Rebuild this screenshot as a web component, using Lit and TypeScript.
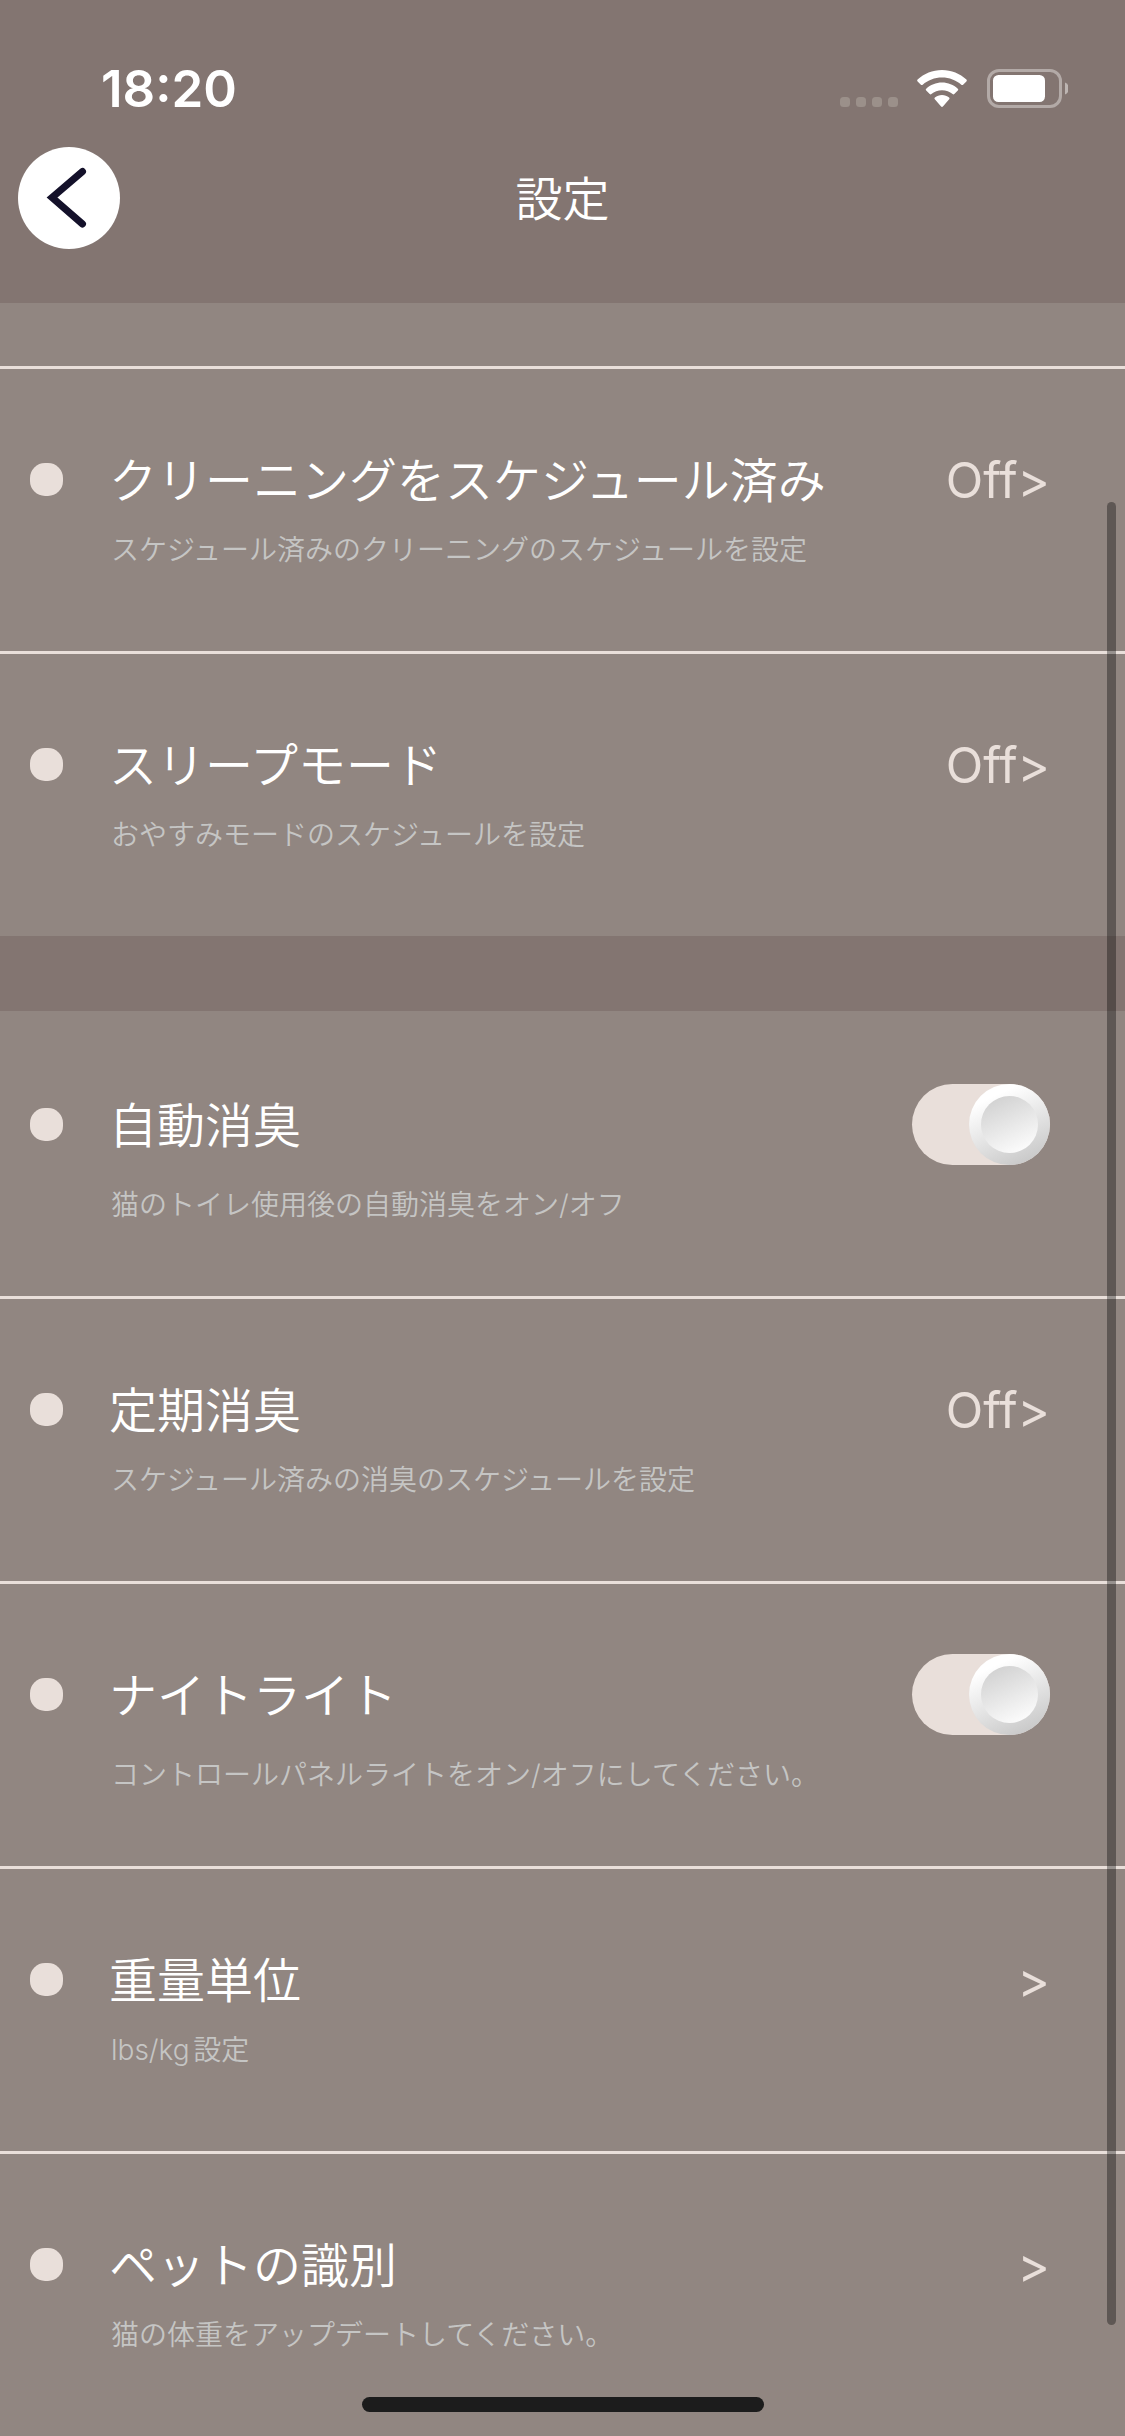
import { LitElement, html, css, svg, nothing } from "lit";
import { customElement, property, state } from "lit/decorators.js";

interface Setting {
  id: string;
  title: string;
  note: string;
  kind: "link" | "toggle";
  value?: string;
}

const CLEANING: Setting[] = [
  {
    id: "clean-schedule",
    title: "クリーニングをスケジュール済み",
    note: "スケジュール済みのクリーニングのスケジュールを設定",
    kind: "link",
    value: "Off",
  },
  {
    id: "sleep",
    title: "スリープモード",
    note: "おやすみモードのスケジュールを設定",
    kind: "link",
    value: "Off",
  },
];

const DEVICE: Setting[] = [
  {
    id: "auto-deodorize",
    title: "自動消臭",
    note: "猫のトイレ使用後の自動消臭をオン/オフ",
    kind: "toggle",
  },
  {
    id: "deodorize-schedule",
    title: "定期消臭",
    note: "スケジュール済みの消臭のスケジュールを設定",
    kind: "link",
    value: "Off",
  },
  {
    id: "night-light",
    title: "ナイトライト",
    note: "コントロールパネルライトをオン/オフにしてください。",
    kind: "toggle",
  },
  { id: "weight-unit", title: "重量単位", note: "lbs/kg設定", kind: "link" },
  {
    id: "pet-id",
    title: "ペットの識別",
    note: "猫の体重をアップデートしてください。",
    kind: "link",
  },
];

@customElement("status-bar")
class StatusBar extends LitElement {
  static styles = css`
    :host {
      display: flex;
      justify-content: space-between;
      height: 132px;
      padding: 0 57px 0 101px;
      box-sizing: border-box;
      color: #fff;
    }
    .time {
      margin-top: 59px;
      font: 600 51px/60px Inter, "Noto Sans", sans-serif;
    }
    .icons {
      display: flex;
      gap: 19px;
      margin-top: 69px;
    }
    svg {
      display: block;
    }
  `;

  render() {
    return html`
      <div class="time">18:20</div>
      <div class="icons">
        <svg width="58" height="39" viewBox="0 0 58 39" aria-hidden="true">
          ${[0, 16, 32, 48].map(
            (x) => svg`<rect x=${x} y="28" width="10" height="10" rx="3.5" fill="#9b908a" />`
          )}
        </svg>
        <svg width="50" height="39" viewBox="0 0 50 39" fill="#fff" aria-hidden="true">
          <path
            d="M25 1C15.500 1 7 4.600.600 10.600c-.6.600-.6 1.200 0 1.800l3.300 3.300c.5.500 1.200.5 1.800 0C10.900 11.200 17.600 8.500 25 8.500s14.100 2.700 19.300 7.200c.6.500 1.300.5 1.800 0l3.300-3.300c.6-.6.600-1.200 0-1.800C43 4.600 34.500 1 25 1z"
          />
          <path
            d="M25 13.500c-6 0-11.600 2.300-15.800 6.200-.6.600-.6 1.200 0 1.800l3.500 3.500c.5.500 1.200.5 1.700.100C17.200 22.700 20.900 21.200 25 21.200s7.800 1.500 10.600 3.900c.5.400 1.200.4 1.700-.1l3.500-3.500c.6-.6.600-1.200 0-1.800C36.600 15.800 31 13.500 25 13.500z"
          />
          <path
            d="M25 26c-2.700 0-5.200 1-7.100 2.600-.6.500-.6 1.200-.1 1.700l6.300 7.200c.5.600 1.300.6 1.800 0l6.300-7.200c.5-.5.500-1.200-.1-1.700C30.200 27 27.700 26 25 26z"
          />
        </svg>
        <svg width="82" height="39" viewBox="0 0 82 39" aria-hidden="true">
          <rect x="2.500" y="1.500" width="72" height="36" rx="10.500" fill="none" stroke="#b3aaa7" stroke-width="3" />
          <rect x="7" y="6" width="52" height="27" rx="5.500" fill="#fff" />
          <path d="M79 13.500c2.600 1 4 3.300 4 6s-1.400 5-4 6z" fill="#bdb5b2" />
        </svg>
      </div>
    `;
  }
}

@customElement("setting-row")
class SettingRow extends LitElement {
  @property({ attribute: false }) setting!: Setting;
  @state() on = true;

  static styles = css`
    :host {
      display: flex;
      flex-direction: column;
      justify-content: center;
      gap: 19px;
      min-height: 282px;
      padding: 0 75px 0 30px;
      box-sizing: border-box;
    }
    .head {
      display: flex;
      align-items: center;
      min-height: 61px;
    }
    .bullet {
      flex: none;
      width: 33px;
      height: 33px;
      margin-right: 46px;
      border-radius: 15px;
      background: #e9dfda;
    }
    .title {
      flex: 1;
      padding-top: 2px;
      color: #fff;
      font-size: 48px;
      font-weight: 350;
      line-height: 58px;
    }
    .note {
      margin: 0 0 0 81px;
      color: #c5c5c4;
      font-size: 28px;
      font-weight: 350;
      line-height: 42px;
      text-autospace: normal;
    }
    .more {
      padding: 2px 0 0;
      border: 0;
      background: none;
      color: #e9dfda;
      font: 400 49px/58px Inter, "Noto Sans", sans-serif;
      cursor: pointer;
    }
    .switch {
      appearance: none;
      flex: none;
      display: flex;
      align-items: center;
      width: 138px;
      height: 81px;
      margin: 0;
      border-radius: 41px;
      background: #b9b0ac;
      cursor: pointer;
    }
    .switch::before {
      content: "";
      width: 57px;
      height: 57px;
      border: 12px solid transparent;
      border-radius: 50%;
      background: linear-gradient(155deg, #cfcfcf 5%, #fff 95%) padding-box,
        linear-gradient(155deg, #fff 20%, #c4c4c4 95%) border-box;
    }
    .switch:checked {
      justify-content: flex-end;
      background: #e9dfda;
    }
  `;

  private toggle(e: Event) {
    this.on = (e.target as HTMLInputElement).checked;
  }

  render() {
    const s = this.setting;
    return html`
      <div class="head">
        <span class="bullet"></span>
        <label class="title" id="title" for="control">${s.title}</label>
        ${s.kind === "toggle"
          ? html`<input class="switch" id="control" type="checkbox" role="switch" .checked=${this.on} @change=${this.toggle} />`
          : html`<button class="more" id="control" type="button" aria-describedby="title">${s.value ?? nothing}&gt;</button>`}
      </div>
      <p class="note">${s.note}</p>
    `;
  }
}

@customElement("app-root")
class AppRoot extends LitElement {
  static styles = css`
    :host {
      display: block;
      position: relative;
      min-height: 100vh;
      background: #837571;
      font-family: Inter, "Noto Sans CJK JP", sans-serif;
    }
    .nav {
      display: grid;
      grid-template-columns: 102px 1fr 102px;
      align-items: center;
      padding: 15px 18px 54px;
    }
    .back {
      width: 102px;
      height: 102px;
      padding: 0;
      border: 0;
      border-radius: 50%;
      background: #fff;
      cursor: pointer;
    }
    .back svg {
      display: block;
    }
    h1 {
      margin: 0;
      padding-top: 2px;
      color: #fff;
      font-size: 47px;
      font-weight: 350;
      line-height: 58px;
      text-align: center;
    }
    .group {
      margin: 0 0 75px;
      padding: 0;
      list-style: none;
      background: #918681;
    }
    .group:last-of-type {
      margin-bottom: 0;
    }
    .item {
      border-top: 3px solid #e9dfda;
    }
    .plain {
      border-top-color: transparent;
    }
    .tail {
      height: 63px;
    }
    .scrollbar {
      position: absolute;
      top: 502px;
      right: 9px;
      bottom: 111px;
      width: 9px;
      border-radius: 5px;
      background: rgba(0, 0, 0, 0.35);
    }
    .home {
      position: absolute;
      right: 0;
      bottom: 24px;
      left: 0;
      width: 402px;
      height: 15px;
      margin: 0 auto;
      border-radius: 8px;
      background: #1c1c1c;
    }
  `;

  render() {
    return html`
      <status-bar></status-bar>
      <header class="nav">
        <button class="back" type="button" aria-label="戻る">
          <svg width="102" height="102" viewBox="0 0 102 102" aria-hidden="true">
            <path d="M64.500 24.500L34 50.500L64.500 77" fill="none" stroke="#14112a" stroke-width="7" stroke-linecap="round" />
          </svg>
        </button>
        <h1>設定</h1>
      </header>
      <ul class="group">
        <li class="tail"></li>
        ${CLEANING.map((s) => html`<li class="item"><setting-row .setting=${s}></setting-row></li>`)}
      </ul>
      <ul class="group">
        ${DEVICE.map(
          (s, i) => html`<li class="item ${i === 0 ? "plain" : ""}"><setting-row .setting=${s}></setting-row></li>`
        )}
      </ul>
      <div class="scrollbar"></div>
      <div class="home"></div>
    `;
  }
}
